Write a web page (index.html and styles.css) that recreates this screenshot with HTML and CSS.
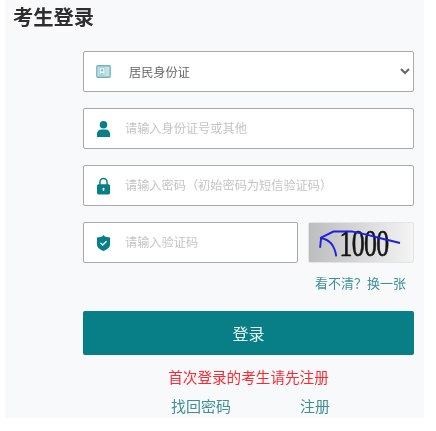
FILE: index.html
```html
<!DOCTYPE html>
<html lang="zh-CN">
<head>
<meta charset="utf-8">
<title>考生登录</title>
<link rel="stylesheet" href="styles.css">
</head>
<body>
<main class="panel">
  <h1 class="title">考生登录</h1>
  <form class="form">
    <div class="field">
      <svg class="icon icon-card" viewBox="0 0 16 14"><rect x=".8" y=".8" width="14.400" height="12.400" rx="1" fill="#c4e2e5" stroke="#6fb5ba" stroke-width="1.400"/><rect x="3.500" y="3" width="6" height="8" fill="#eef6f7" stroke="#94c6ca" stroke-width=".7"/><circle cx="6.500" cy="5.800" r="1.200" fill="#7fb0b5"/><path d="M4.500 10.300c.4-1.800 3.600-1.800 4 0z" fill="#7fb0b5"/></svg>
      <select class="control select"><option>居民身份证</option></select>
    </div>
    <div class="field">
      <svg class="icon" viewBox="0 0 16 18"><circle cx="8" cy="4.500" r="4" fill="#087e87"/><path d="M1 17.500v-3.200c0-2.800 2.200-4.800 4.600-4.800h4.800c2.400 0 4.600 2 4.600 4.800v3.200z" fill="#087e87"/></svg>
      <input class="control" type="text" placeholder="请输入身份证号或其他">
    </div>
    <div class="field">
      <svg class="icon" viewBox="0 0 16 18"><path d="M4.200 8V4.800a3.800 3.800 0 0 1 7.600 0V8" fill="none" stroke="#087e87" stroke-width="1.600"/><rect x="1" y="7" width="14" height="11" rx="1.800" fill="#087e87"/><rect x="7.100" y="10.800" width="1.800" height="3.400" rx=".6" fill="#d8ecee"/></svg>
      <input class="control" type="text" placeholder="请输入密码（初始密码为短信验证码）">
    </div>
    <div class="captcha-row">
      <div class="field captcha-field">
        <svg class="icon" viewBox="0 0 16 18"><path d="M8 .5l1.800 1.700L15 3v7.500c0 3.300-3.800 5.800-7 7-3.200-1.200-7-3.700-7-7V3l5.200-.8z" fill="#087e87"/><path d="M4.800 8.800l2.300 2.300 4.200-4" fill="none" stroke="#e4f2f3" stroke-width="1.600"/></svg>
        <input class="control" type="text" placeholder="请输入验证码">
      </div>
      <div class="captcha-image">
        <span class="captcha-text">1000</span>
        <svg class="captcha-lines" viewBox="0 0 106 41"><path d="M10 16L24 9L44 9C60 12 76 17 94 21" fill="none" stroke="#2020e0" stroke-width="2"/><path d="M10 26L11 16C19 17 25 22 27 35" fill="none" stroke="#2020e0" stroke-width="2"/></svg>
      </div>
    </div>
    <div class="refresh"><a class="link" href="#">看不清？换一张</a></div>
    <button class="submit" type="button">登录</button>
    <p class="notice">首次登录的考生请先注册</p>
    <div class="links"><a class="link" href="#">找回密码</a><a class="link" href="#">注册</a></div>
  </form>
</main>
</body>
</html>
```
FILE: styles.css
```css
* { box-sizing: border-box; }
html, body { margin: 0; background: #fff; }
body {
  font-family: "Noto Sans CJK SC", "Liberation Sans", sans-serif;
  overflow: hidden;
}
.panel {
  width: 419px;
  height: 418px;
  margin-left: 5px;
  background: #f8f9fb;
  overflow: hidden;
  filter: blur(0.5px);
}
.title {
  margin: 0;
  padding-left: 8px;
  font-size: 20.300px;
  line-height: 33px;
  font-weight: 700;
  color: #2e2e2e;
}
.form {
  width: 331px;
  margin: 18px 0 0 78px;
  display: flex;
  flex-direction: column;
}
.field {
  position: relative;
  height: 41px;
  margin-bottom: 16px;
}
.icon {
  position: absolute;
  left: 13px;
  top: 11.500px;
  width: 15px;
  height: 18px;
  pointer-events: none;
  z-index: 1;
}
.icon-card { height: 13px; top: 14px; }
.control {
  width: 100%;
  height: 100%;
  padding: 0 12px 2px 41px;
  border: 1px solid #a9a9a9;
  border-radius: 2px;
  background: #fff;
  font-family: inherit;
  font-size: 12.200px;
  color: #555;
}
.control::placeholder { color: #c4c4c4; opacity: 1; }
.select { padding: 0 12px 0 41px; color: #666; }
.captcha-row {
  display: flex;
  justify-content: space-between;
  height: 41px;
}
.captcha-field { width: 215px; margin: 0; }
.captcha-image {
  position: relative;
  display: flex;
  justify-content: center;
  align-items: flex-start;
  width: 106px;
  height: 41px;
  padding-top: 2px;
  border: 1px solid #e4e4e4;
  border-radius: 2px;
  background: linear-gradient(90deg, #bdbdbd, #f4f4f4);
}
.captcha-text {
  display: block;
  margin-left: 6px;
  font-family: "Liberation Serif", serif;
  font-size: 38px;
  line-height: 37px;
  letter-spacing: -1px;
  color: #151515;
  -webkit-text-stroke: 0.7px #151515;
  transform: scaleX(0.68);
}
.captcha-lines {
  position: absolute;
  inset: 0;
  width: 100%;
  height: 100%;
}
.refresh {
  margin-top: 10px;
  padding-right: 8px;
  text-align: right;
  font-size: 13px;
  line-height: 20px;
}
.link { color: #3f8f96; text-decoration: none; }
.submit {
  height: 44px;
  margin-top: 18px;
  border: 0;
  border-radius: 2px;
  background: #087e87;
  color: #eaf5f6;
  font-family: inherit;
  font-size: 16px;
}
.notice {
  margin: 8px 0 0;
  text-align: center;
  font-size: 14.600px;
  line-height: 28px;
  color: #fb2a32;
}
.links {
  display: flex;
  justify-content: space-between;
  margin-top: 3px;
  padding: 0 84px 0 88px;
  font-size: 15px;
  line-height: 24px;
}
```
